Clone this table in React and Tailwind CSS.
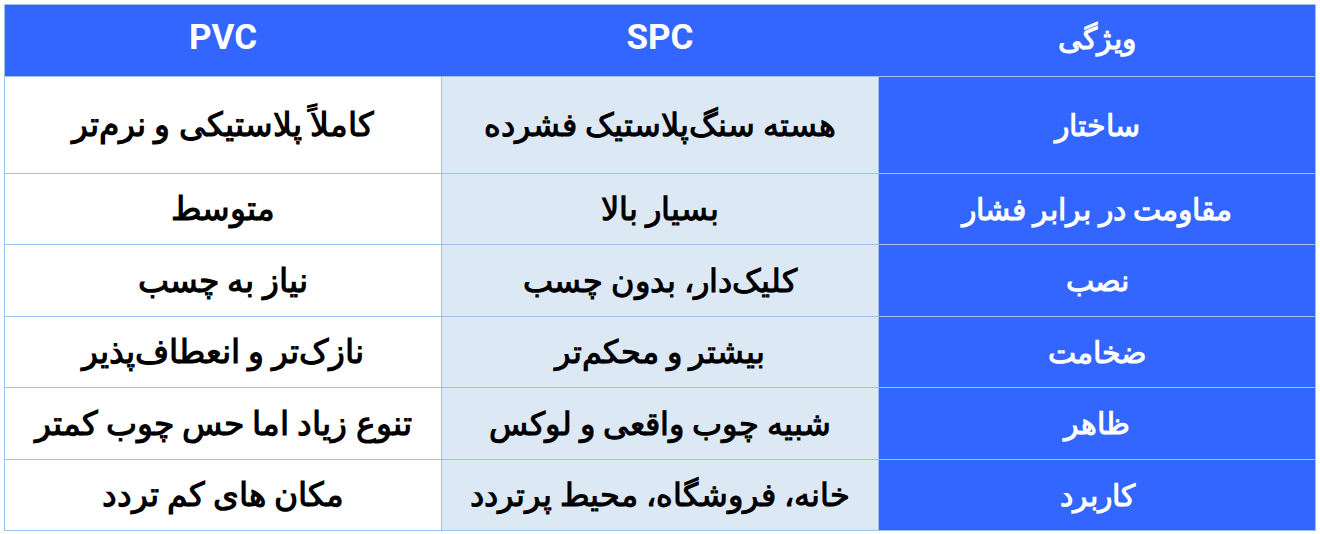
import React from "react";

const rows = [
  ["ساختار", "هسته سنگ‌پلاستیک فشرده", "کاملاً پلاستیکی و نرم‌تر", "h-[97px]"],
  ["مقاومت در برابر فشار", "بسیار بالا", "متوسط", "h-[71px]"],
  ["نصب", "کلیک‌دار، بدون چسب", "نیاز به چسب", "h-[72px]"],
  ["ضخامت", "بیشتر و محکم‌تر", "نازک‌تر و انعطاف‌پذیر", "h-[71px]"],
  ["ظاهر", "شبیه چوب واقعی و لوکس", "تنوع زیاد اما حس چوب کمتر", "h-[72px]"],
  ["کاربرد", "خانه، فروشگاه، محیط پرتردد", "مکان های کم تردد", "h-[71px]"],
];

const font = { fontFamily: "Roboto, sans-serif" };

export default function App() {
  return (
    <div className="w-[1320px] h-[534px] bg-white pt-[4px] pl-[4px]" style={font}>
      <div dir="rtl" className="w-[1312px] border-t border-r border-[#9fc3e7]">
        <div className="grid grid-cols-[437px_437px_437px] h-[72px] bg-[#3366ff] border-b border-[#9fc3e7]">
          <div className="flex items-center justify-center pb-[4px] border-l border-[#3366ff] text-white text-[30px] font-bold">ویژگی</div>
          <div className="flex items-center justify-center pb-[4px] border-l border-[#3366ff] text-white text-[35px] font-bold">SPC</div>
          <div className="flex items-center justify-center pb-[4px] border-l border-[#9fc3e7] text-white text-[35px] font-bold">PVC</div>
        </div>
        {rows.map(([a, b, c, h], i) => (
          <div key={i} className={`grid grid-cols-[437px_437px_437px] ${h} border-b border-[#9fc3e7]`}>
            <div className="flex items-center justify-center bg-[#3366ff] border-l border-[#9fc3e7] text-white text-[30px] font-bold">{a}</div>
            <div className="flex items-center justify-center bg-[#dde8f5] border-l border-[#9fc3e7] text-black text-[32px] font-semibold">{b}</div>
            <div className="flex items-center justify-center bg-white border-l border-[#9fc3e7] text-black text-[33px] font-semibold">{c}</div>
          </div>
        ))}
      </div>
    </div>
  );
}
